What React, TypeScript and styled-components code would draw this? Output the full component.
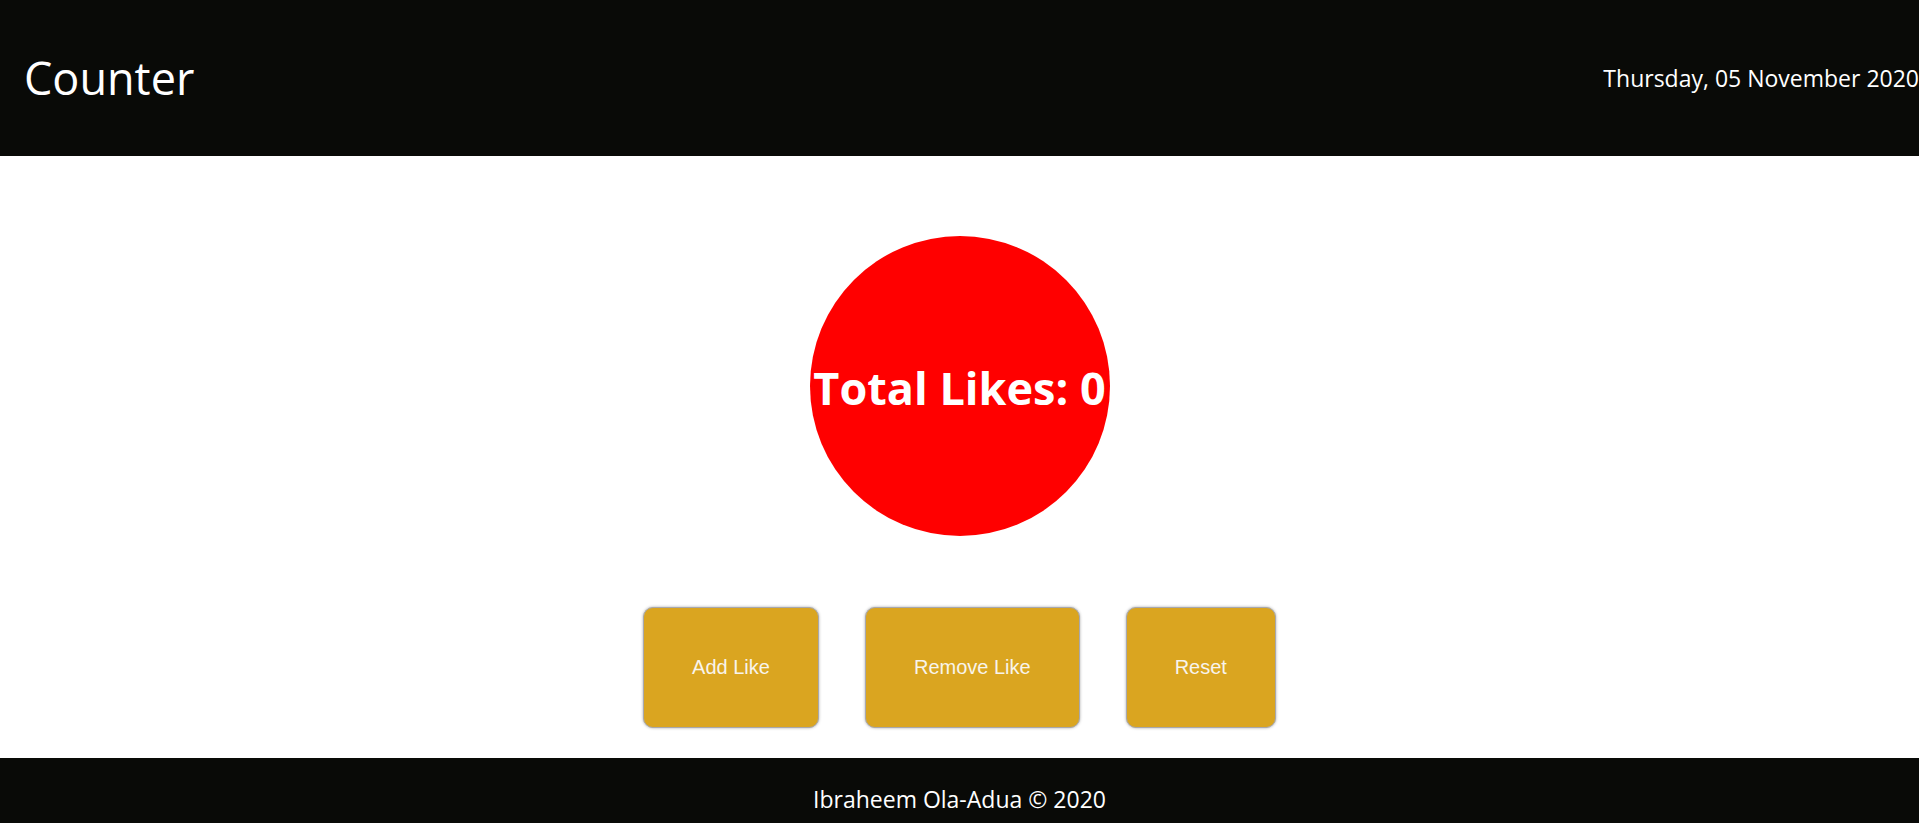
import React, { useState } from 'react';
import styled, { createGlobalStyle } from 'styled-components';

const GlobalStyle = createGlobalStyle`
  * {
    box-sizing: border-box;
  }
  body {
    margin: 0;
    background: #ffffff;
    font-family: 'Segoe UI', 'Open Sans', 'Noto Sans', sans-serif;
  }
`;

const Page = styled.div`
  display: flex;
  flex-direction: column;
  min-height: 100vh;
`;

const Header = styled.header`
  display: flex;
  align-items: center;
  justify-content: space-between;
  padding: 46px 0 46px 24px;
  background: #090a07;
  color: #ffffff;
`;

const Title = styled.h1`
  margin: 0;
  font-size: 45px;
  font-weight: 400;
  line-height: 64px;
`;

const Today = styled.time`
  font-size: 23px;
  line-height: 32px;
  white-space: nowrap;
`;

const Main = styled.main`
  display: flex;
  flex-direction: column;
  align-items: center;
  gap: 71px;
  padding: 80px 0 30px;
`;

const Circle = styled.div`
  display: flex;
  align-items: center;
  justify-content: center;
  width: 300px;
  height: 300px;
  padding-top: 4px;
  border-radius: 50%;
  background: #ff0000;
`;

const Total = styled.h2`
  margin: 0;
  color: #ffffff;
  font-size: 45px;
  font-weight: 700;
  line-height: 64px;
  white-space: nowrap;
`;

const Actions = styled.div`
  display: flex;
  flex-wrap: wrap;
  justify-content: center;
  gap: 46px;
`;

const ActionButton = styled.button`
  padding: 48px;
  border: 1px solid #a8a8ac;
  border-radius: 10px;
  background: #daa520;
  box-shadow: 0 0 3px #a9a9a9;
  color: #f8f4ec;
  font-family: Arial, 'Liberation Sans', sans-serif;
  font-size: 20px;
  line-height: 23px;
  cursor: pointer;
`;

const Footer = styled.footer`
  flex: 1;
  padding: 25px 0 8px;
  background: #090a07;
  color: #ffffff;
  font-size: 23px;
  line-height: 32px;
  text-align: center;
`;

export default function App() {
  const [likes, setLikes] = useState(0);

  return (
    <Page>
      <GlobalStyle />
      <Header>
        <Title>Counter</Title>
        <Today dateTime="2020-11-05">Thursday, 05 November 2020</Today>
      </Header>
      <Main>
        <Circle>
          <Total>Total Likes: {likes}</Total>
        </Circle>
        <Actions>
          <ActionButton type="button" onClick={() => setLikes(likes + 1)}>
            Add Like
          </ActionButton>
          <ActionButton type="button" onClick={() => setLikes(Math.max(0, likes - 1))}>
            Remove Like
          </ActionButton>
          <ActionButton type="button" onClick={() => setLikes(0)}>
            Reset
          </ActionButton>
        </Actions>
      </Main>
      <Footer>Ibraheem Ola-Adua © 2020</Footer>
    </Page>
  );
}
